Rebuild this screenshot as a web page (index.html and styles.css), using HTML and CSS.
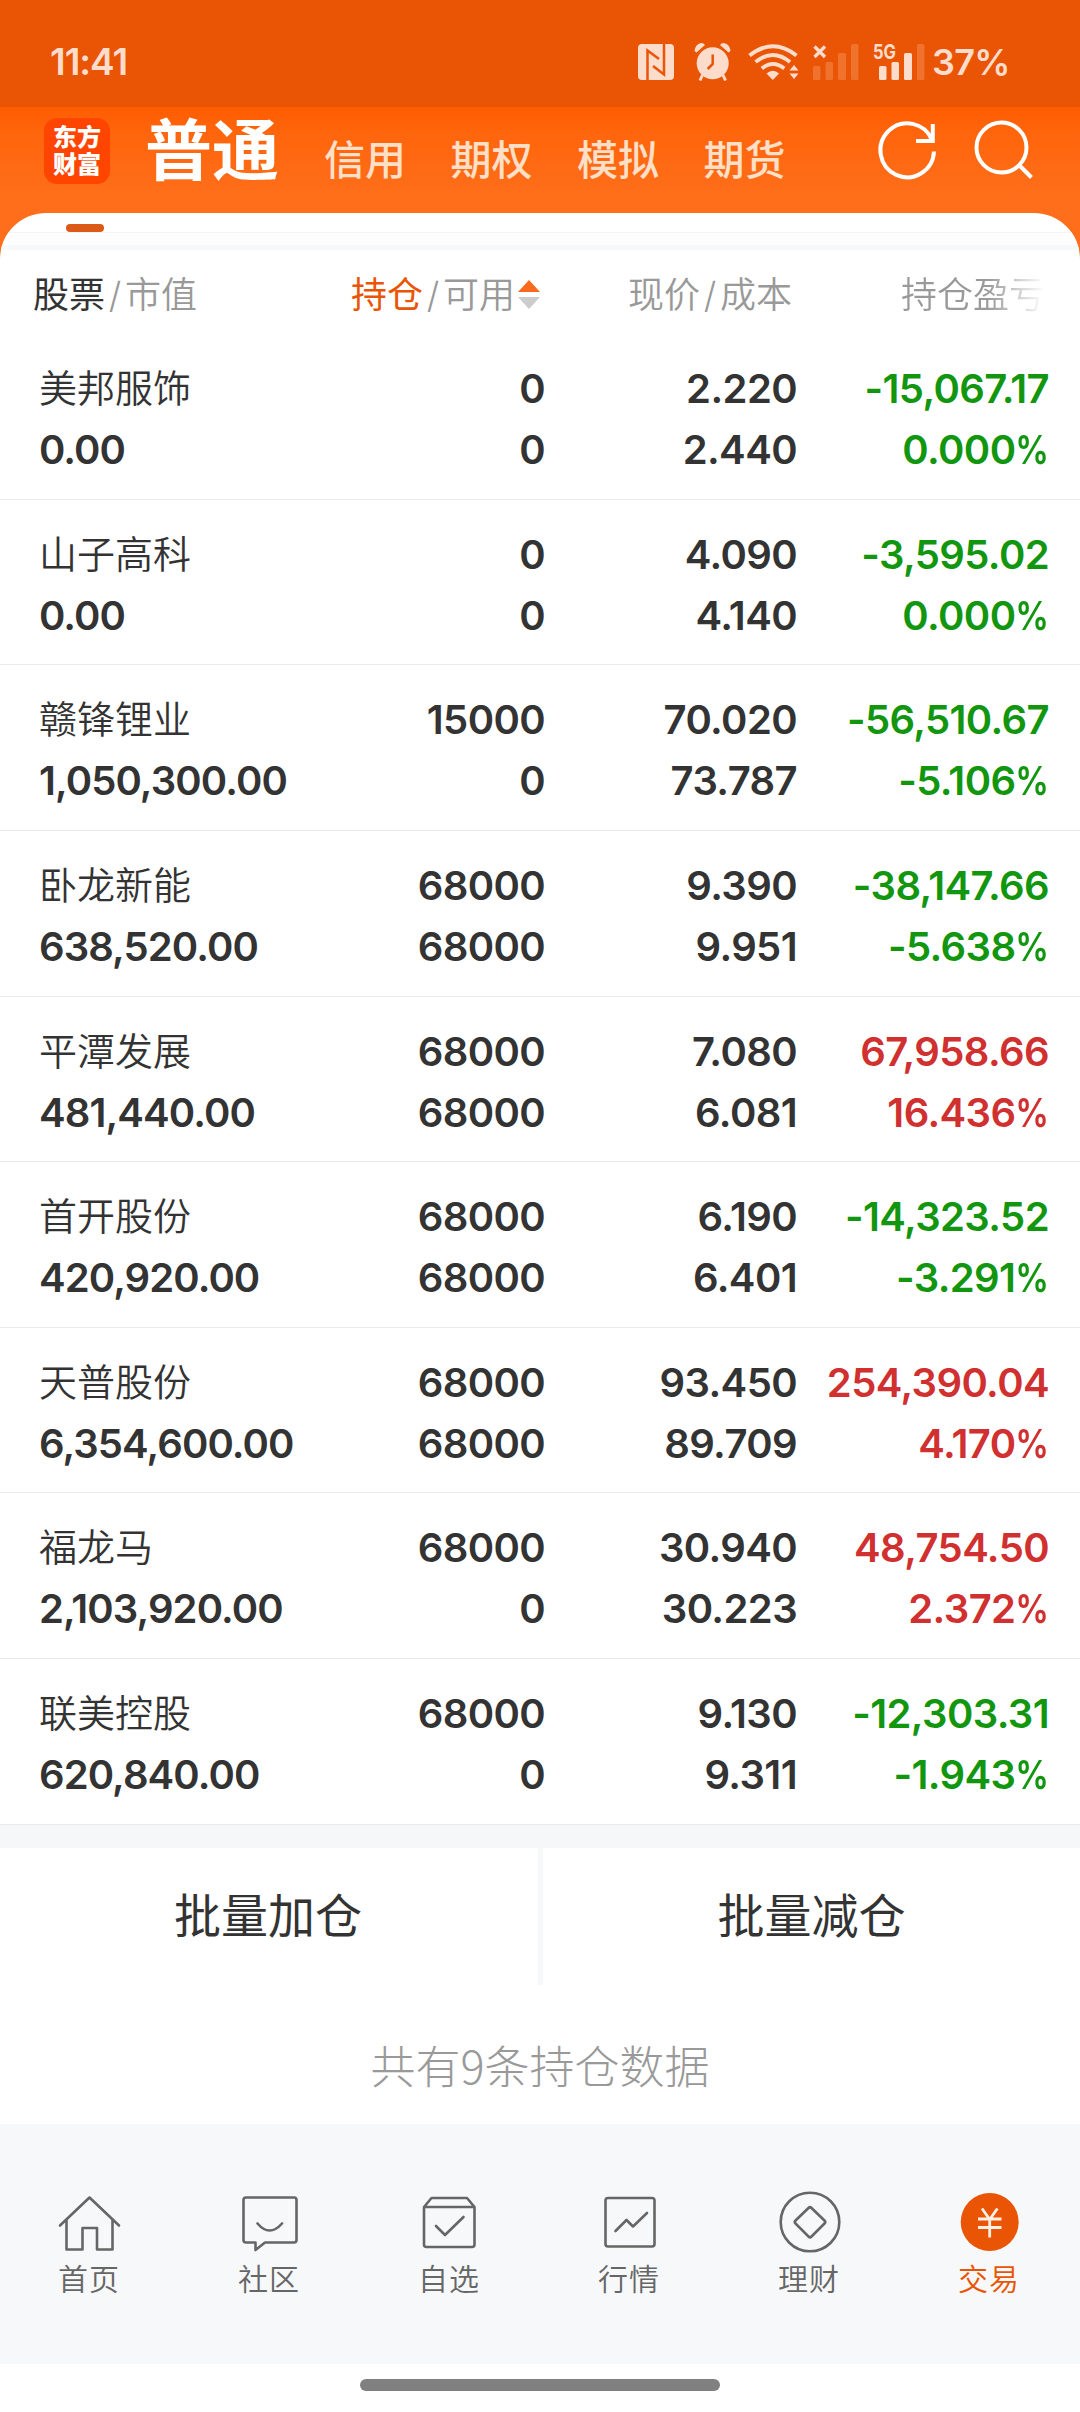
FILE: index.html
```html
<!DOCTYPE html>
<html lang="zh-CN">
<head>
<meta charset="utf-8">
<title>东方财富 - 交易持仓</title>
<link rel="stylesheet" href="styles.css">
</head>
<body>
<header class="status">
  <span class="time">11:41</span>
  <svg class="status-icons" width="292" height="44" viewBox="634 40 292 44">
    <g fill="#fddccb">
      <rect x="638" y="44" width="36" height="36" rx="4"/>
      <path d="M694.5 51q.5-6.500 6.500-8 3 0 4 2l-8.500 7.500zM730.500 51q-.5-6.500-6.500-8-3 0-4 2l8.500 7.500z"/>
      <circle cx="712.700" cy="63.300" r="16"/>
      <path d="M702.500 75l-2.500 5.500M723 75l2.500 5.500" stroke="#fddccb" stroke-width="3"/>
      <path d="M772.800 80l-6.300-6.500q6.300-5.500 12.600 0zM794 65l4.500 5.500h-9zM794 79l4.500-5.500h-9z"/>
      <rect x="879" y="66" width="7.500" height="14" rx="1.500"/>
      <rect x="891.500" y="62" width="7.500" height="18" rx="1.500"/>
      <rect x="904" y="53" width="8" height="27" rx="1.500"/>
    </g>
    <g fill="none" stroke="#e95504">
      <path d="M647.500 80V50.500L659 59M664 44v30.500L653 66" stroke-width="2.500"/>
      <path d="M712.700 54.500v9.500l-5 5" stroke-width="2.500"/>
    </g>
    <g fill="none" stroke="#fddccb" stroke-width="3.800">
      <path d="M749.500 55.500q23.500-18.500 47 0M755.500 62q17.500-14 34.500 0M761.800 68.500q11-9 22.500 0"/>
      <path d="M814.500 46.500l10.500 10.500M825 46.500l-10.500 10.500" stroke-width="3.300"/>
    </g>
    <g fill="#f0722c">
      <rect x="813" y="66" width="7.500" height="14" rx="1.500"/>
      <rect x="825.500" y="62" width="7.500" height="18" rx="1.500"/>
      <rect x="838" y="53" width="8" height="27" rx="1.500"/>
      <rect x="851" y="44" width="7.500" height="36" rx="1.500"/>
      <rect x="917" y="44" width="7.500" height="36" rx="1.500"/>
    </g>
    <text class="net" x="873" y="59.300" textLength="23" lengthAdjust="spacingAndGlyphs">5G</text>
  </svg>
  <span class="battery">37%</span>
</header>

<nav class="top">
  <div class="logo"><span>东方</span><span>财富</span></div>
  <div class="accounts">
    <b>普通</b><span>信用</span><span>期权</span><span>模拟</span><span>期货</span>
  </div>
  <svg class="tools" width="170" height="80" viewBox="870 110 170 80" fill="none" stroke="#fff" stroke-width="4">
    <path d="M934 151.500A26.800 27 0 1 1 932 140"/>
    <path d="M932.800 124v17H916"/>
    <circle cx="1001.500" cy="147.500" r="25"/>
    <path d="M1019 165l12.500 12.500"/>
  </svg>
</nav>

<main class="panel">
  <div class="tabline"><i></i></div>
  <div class="gapline"></div>
  <div class="cols head">
    <div><em>股票</em><s>/</s>市值</div>
    <div class="sorted"><em>持仓</em><s>/</s>可用<svg width="22" height="30" viewBox="0 0 22 30"><path d="M0 12L11 0l11 12z" fill="#f96a1e"/><path d="M0 17h22L11 29z" fill="#ccc"/></svg></div>
    <div>现价<s>/</s>成本</div>
    <div class="fade">持仓盈亏</div>
  </div>
  <section class="list">
    <article class="cols row down"><p><q>美邦服饰</q><span>0.00</span></p><p><span>0</span><span>0</span></p><p><span>2.220</span><span>2.440</span></p><p><span>-15,067.17</span><span>0.000<u>%</u></span></p></article>
    <article class="cols row down"><p><q>山子高科</q><span>0.00</span></p><p><span>0</span><span>0</span></p><p><span>4.090</span><span>4.140</span></p><p><span>-3,595.02</span><span>0.000<u>%</u></span></p></article>
    <article class="cols row down"><p><q>赣锋锂业</q><span>1,050,300.00</span></p><p><span>15000</span><span>0</span></p><p><span>70.020</span><span>73.787</span></p><p><span>-56,510.67</span><span>-5.106<u>%</u></span></p></article>
    <article class="cols row down"><p><q>卧龙新能</q><span>638,520.00</span></p><p><span>68000</span><span>68000</span></p><p><span>9.390</span><span>9.951</span></p><p><span>-38,147.66</span><span>-5.638<u>%</u></span></p></article>
    <article class="cols row up"><p><q>平潭发展</q><span>481,440.00</span></p><p><span>68000</span><span>68000</span></p><p><span>7.080</span><span>6.081</span></p><p><span>67,958.66</span><span>16.436<u>%</u></span></p></article>
    <article class="cols row down"><p><q>首开股份</q><span>420,920.00</span></p><p><span>68000</span><span>68000</span></p><p><span>6.190</span><span>6.401</span></p><p><span>-14,323.52</span><span>-3.291<u>%</u></span></p></article>
    <article class="cols row up"><p><q>天普股份</q><span>6,354,600.00</span></p><p><span>68000</span><span>68000</span></p><p><span>93.450</span><span>89.709</span></p><p><span>254,390.04</span><span>4.170<u>%</u></span></p></article>
    <article class="cols row up"><p><q>福龙马</q><span>2,103,920.00</span></p><p><span>68000</span><span>0</span></p><p><span>30.940</span><span>30.223</span></p><p><span>48,754.50</span><span>2.372<u>%</u></span></p></article>
    <article class="cols row down"><p><q>联美控股</q><span>620,840.00</span></p><p><span>68000</span><span>0</span></p><p><span>9.130</span><span>9.311</span></p><p><span>-12,303.31</span><span>-1.943<u>%</u></span></p></article>
  </section>
  <div class="batch"><button>批量加仓</button><button>批量减仓</button></div>
  <p class="count">共有9条持仓数据</p>
</main>

<footer class="tabs">
  <a><svg viewBox="0 0 70 70"><path d="M5 37.500L34.500 9.500L64 37.500M11.500 32v29.500H27.500V40H42v21.500H57.500V32"/></svg>首页</a>
  <a><svg viewBox="0 0 70 70"><path d="M11 9.500h48q2.500 0 2.500 2.500v40q0 2.500-2.500 2.500H30l-9.500 7.500v-7.500H11q-2.500 0-2.500-2.500V12q0-2.500 2.500-2.500zM22.500 35.500q12 14 24.500 0"/></svg>社区</a>
  <a><svg viewBox="0 0 70 70"><path d="M9 19l7.500-9h35.500l7.500 9v37.500q0 2.500-2.500 2.500h-45.500q-2.500 0-2.500-2.500zM9 19h50.500M21 38l9 9L48.500 29"/></svg>自选</a>
  <a><svg viewBox="0 0 70 70"><rect x="10.500" y="10" width="49" height="48.500" rx="2.500"/><path d="M20.500 43L31.500 32l6.500 6.500L52 25"/></svg>行情</a>
  <a><svg viewBox="0 0 70 70"><circle cx="35" cy="34" r="29.300"/><path d="M33.500 20q1.500-1.500 3 0l13 12.500q1.500 1.500 0 3l-13 13q-1.500 1.500-3 0l-13-13q-1.500-1.500 0-3z"/></svg>理财</a>
  <a class="on"><svg viewBox="0 0 70 70"><circle cx="34.700" cy="34" r="29" fill="#e95504"/><path class="yen" d="M27 20.500l7.700 11 7.700-11M34.700 31v18.500M23 31h23.500M23 39.500h23.500"/></svg>交易</a>
</footer>
<div class="home"><i></i></div>
</body>
</html>
```
FILE: styles.css
```css
* { box-sizing: border-box; margin: 0; padding: 0; }
body {
  width: 1080px; height: 2412px; overflow: hidden; background: #fff; color: #333;
  font-family: Inter, "Noto Sans CJK SC", sans-serif;
  display: flex; flex-direction: column;
}
i, em, s, u { font-style: normal; text-decoration: none; }
q { quotes: none; }
svg { display: block; flex: none; }

.status {
  height: 107px; flex: none; background: #e95504; color: #fddccb;
  display: flex; align-items: center; padding: 17px 0 0 50px;
  font-size: 37px; font-weight: 600; line-height: 46px;
}
.time { width: 584px; letter-spacing: -1px; }
.battery { margin-left: 6px; letter-spacing: -0.700px; font-size: 36px; white-space: nowrap; }
.net { font-size: 20px; font-weight: 700; fill: #fddccb; }

.top {
  height: 153px; flex: none; background: linear-gradient(#ff5c02, #ff650c 25px, #ff6e1a 90px);
  display: flex; align-items: flex-start; padding-left: 44px; color: #fff;
}
.logo {
  width: 66px; height: 66px; margin-top: 11px; border-radius: 13px; background: #ff4500;
  font-size: 24px; font-weight: 900; line-height: 27px;
  display: flex; flex-direction: column; align-items: center; justify-content: center;
}
.accounts {
  width: 724px; height: 86px; margin-left: 35px; padding-top: 1px; white-space: nowrap;
  display: flex; align-items: baseline; font-size: 41px; font-weight: 500; line-height: 86px; color: #ffdfc6;
}
.accounts b { font-size: 67px; font-weight: 700; color: #fff; margin-right: 45px; }
.accounts span { width: 126.500px; }
.tools { margin: 3px 0 0 1px; }

.panel {
  height: 1911px; margin-top: -47px; flex: none; background: #fff;
  border-radius: 46px 46px 0 0; overflow: hidden; display: flex; flex-direction: column;
}
.tabline { height: 20px; flex: none; padding: 11px 66px 0; border-bottom: 1px solid #f3f4f5; }
.tabline i { display: block; width: 38px; height: 8px; border-radius: 4px; background: #dc5a17; }
.gapline { height: 17px; flex: none; border-bottom: 5px solid #f6f8fa; background: #fdfdfd; }
.cols { display: grid; grid-template-columns: 300px 245px 252px 251px; }
.head { height: 84px; flex: none; font-size: 36px; font-weight: 350; line-height: 52px; padding-top: 19px; color: #999; white-space: nowrap; }
.head > div { display: flex; justify-content: flex-end; }
.head > div:first-child { justify-content: flex-start; padding-left: 33px; }
.head em { color: #333; font-weight: 400; }
.head s { width: 20px; text-align: center; }
.head .sorted { margin-right: 5px; }
.sorted em { color: #e95504; }
.sorted svg { margin: 11px 0 0 3px; }
.head > div:nth-child(3) { padding-right: 5px; }
.head .fade { padding-right: 3px; color: transparent; background: linear-gradient(90deg, #999 0, #999 190px, #fff 248px); background-clip: text; -webkit-background-clip: text; }

.row { height: 165.630px; border-bottom: 1px solid #eaeaea; padding-top: 24px; }
.row p { display: flex; flex-direction: column; text-align: right; font-size: 40px; font-weight: 600; letter-spacing: -0.600px; line-height: 61px; }
.row p:first-child { padding-left: 39px; text-align: left; letter-spacing: -0.900px; }
.row p:last-child { margin-right: -1px; }
.row span, .row q { height: 61px; white-space: nowrap; }
.row q { font-size: 38px; font-weight: 350; line-height: 61px; letter-spacing: 0; }
.row u { display: inline-block; margin-left: -6px; transform: scaleX(.84); transform-origin: right; }
.down p:last-child { color: #12960f; }
.up p:last-child { color: #d0302f; }

.batch { height: 160px; flex: none; border-top: 23px solid #f6f7f9; display: grid; grid-template-columns: 543px 537px; }
.batch button { border: 0; background: none; font: 400 47px/60px Inter, "Noto Sans CJK SC", sans-serif; color: #333; }
.batch button:first-child { border-right: 5px solid #f6f7f9; padding-right: 2px; }
.count { text-align: center; font-size: 45px; font-weight: 200; line-height: 60px; padding-top: 50px; color: #999; font-family: "Noto Sans CJK SC", sans-serif; }

.tabs {
  height: 240px; flex: none; background: #f7f8fa; padding-top: 64px;
  display: grid; grid-template-columns: repeat(6, 180px);
}
.tabs a { display: flex; flex-direction: column; align-items: center; font-size: 30px; letter-spacing: 1px; font-weight: 350; line-height: 40px; color: #666; padding-right: 2px; }
.tabs svg { width: 70px; height: 70px; margin: 0 -1px 1px 1px; fill: none; stroke: #666; stroke-width: 2.600; stroke-linejoin: round; stroke-linecap: round; }
.tabs .on { color: #e95504; }
.on circle { stroke: none; }
.on .yen { stroke: #fff0e5; stroke-width: 2.800; stroke-linecap: butt; }
.home { flex: 1; display: flex; justify-content: center; padding-top: 15px; }
.home i { width: 360px; height: 12px; border-radius: 6px; background: #808080; }
```
